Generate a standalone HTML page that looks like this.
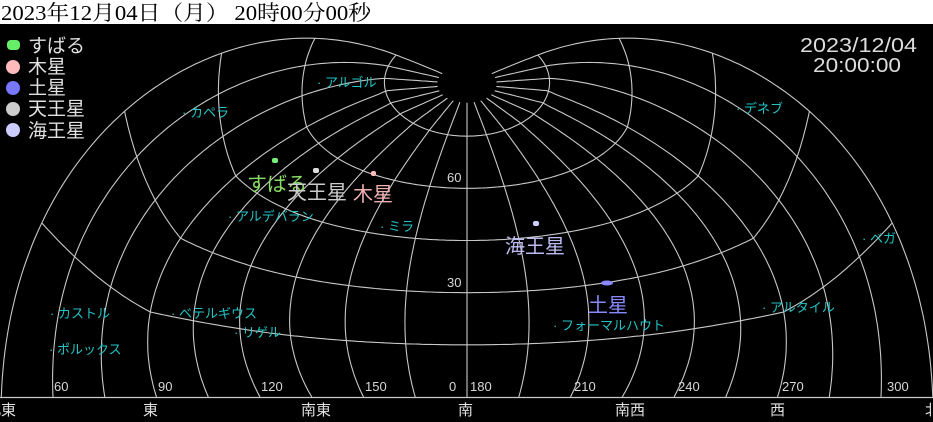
<!DOCTYPE html>
<html><head><meta charset="utf-8">
<style>
html,body{margin:0;padding:0;background:#000;width:933px;height:422px;overflow:hidden}
svg{display:block}
.jp{font-family:"Liberation Sans","Noto Sans CJK JP",sans-serif}
</style></head>
<body>
<svg id="s" width="933" height="422" viewBox="0 0 933 422" xmlns="http://www.w3.org/2000/svg">
<rect x="0" y="0" width="933" height="422" fill="#000"/>
<rect x="0" y="0" width="933" height="24" fill="#fff"/>
<text x="1" y="20" font-size="21" fill="#000" textLength="370" lengthAdjust="spacingAndGlyphs" font-family="'Liberation Serif','Noto Serif CJK SC',serif">2023年12月04日（月） 20時00分00秒</text>
<g id="grid" fill="none" stroke="#c8c8c8" stroke-width="1.1"></g>
<line x1="0" y1="397.5" x2="933" y2="397.5" stroke="#c8c8c8" stroke-width="1.3"/>
<ellipse cx="467" cy="79" rx="23" ry="21" fill="#000"/>
<g class="jp" font-size="13" fill="#d8d8d8">
<text x="54" y="391">60</text><text x="158" y="391">90</text><text x="261" y="391">120</text>
<text x="365" y="391">150</text><text x="449" y="391">0</text><text x="470" y="391">180</text>
<text x="574" y="391">210</text><text x="678" y="391">240</text><text x="782" y="391">270</text>
<text x="887" y="391">300</text>
<text x="447" y="182">60</text><text x="447" y="287">30</text>
</g>
<g class="jp" font-size="15" fill="#e0e0e0">
<text x="-14" y="415">北東</text><text x="143" y="415">東</text><text x="301" y="415">南東</text>
<text x="458" y="415">南</text><text x="615" y="415">南西</text><text x="770" y="415">西</text>
<text x="925" y="415">北西</text>
</g>
<g class="jp" font-size="20" fill="#dcdcdc">
<text x="800" y="52" textLength="117" lengthAdjust="spacingAndGlyphs">2023/12/04</text>
<text x="813" y="72" textLength="88" lengthAdjust="spacingAndGlyphs">20:00:00</text>
</g>
<g class="jp" font-size="19" fill="#e0e0e0">
<rect x="7" y="40" width="13" height="10" rx="4" fill="#66ee66"/>
<circle cx="13" cy="67" r="7" fill="#ffbbbb"/>
<circle cx="13" cy="88" r="7" fill="#7777ff"/>
<circle cx="13" cy="109" r="7" fill="#cccccc"/>
<circle cx="13" cy="130" r="7" fill="#ccccff"/>
<text x="28" y="52">すばる</text><text x="28" y="73">木星</text><text x="28" y="94">土星</text>
<text x="28" y="115">天王星</text><text x="28" y="137">海王星</text>
</g>
<g class="jp" font-size="13" fill="#22c4c4">
<text x="317" y="87">· アルゴル</text>
<text x="182" y="117">· カペラ</text>
<text x="736" y="113">· デネブ</text>
<text x="228" y="221">· アルデバラン</text>
<text x="380" y="231">· ミラ</text>
<text x="862" y="243">· ベガ</text>
<text x="50" y="318">· カストル</text>
<text x="171" y="318">· ベテルギウス</text>
<text x="234" y="337">· リゲル</text>
<text x="49" y="354">· ポルックス</text>
<text x="762" y="312">· アルタイル</text>
<text x="553" y="330">· フォーマルハウト</text>
</g>
<g class="jp" font-size="20">
<rect x="272" y="158" width="6" height="5" rx="2" fill="#77ee77"/>
<rect x="313" y="168" width="6" height="5" rx="2" fill="#dddddd"/>
<rect x="371" y="171" width="5" height="5" rx="2" fill="#ffbbbb"/>
<rect x="533" y="221" width="6" height="5" rx="2" fill="#ccccff"/>
<ellipse cx="607" cy="283" rx="6" ry="2.5" fill="#8888ff"/>
<text x="247" y="191" fill="#88dd66">すばる</text>
<text x="287" y="199" fill="#cccccc">天王星</text>
<text x="353" y="201" fill="#f0b0b0">木星</text>
<text x="505" y="253" fill="#bbbbf0">海王星</text>
<text x="588" y="312" fill="#8888ff">土星</text>
</g>
</svg>
<script>
(function(){
var Z=[467,84];
function P(t,phi){
  var s=phi<0?-1:1, ap=Math.abs(phi), a=ap*Math.PI/180*0.917;
  var ex=495*Math.sin(a), ey=313*Math.cos(a);
  var hx=3.45*ap, hy=313;
  var wx=Math.pow(t,2.2);
  var u=Math.max(0,(t-1/6)/(5/6));
  var p=0.7+0.9*Math.max(0,(ap-90)/45);
  var wy=Math.pow(u,p);
  var kb=80*Math.pow(Math.max(0,(ap-60)/75),2);
  var bul=kb*t*t*(1-t)*6.75;
  var x=(ex+(hx-ex)*wx+bul)*t, y=(ey+(hy-ey)*wy)*t;
  return [Z[0]+s*x, Z[1]+y];
}
var g=document.getElementById('grid'), ns='http://www.w3.org/2000/svg';
function add(pts){
  var d='M'+pts.map(function(q){return q[0].toFixed(1)+' '+q[1].toFixed(1)}).join('L');
  var e=document.createElementNS(ns,'path'); e.setAttribute('d',d); g.appendChild(e);
}
for(var k=1;k<=5;k++){
  var t=k/6, pts=[];
  for(var ph=-135;ph<=135;ph+=1) pts.push(P(t,ph));
  add(pts);
}
for(var ph=-135;ph<=135;ph+=15){
  var pts=[];
  for(var i=0;i<=120;i++){ var t=0.06+0.94*i/120; pts.push(P(t,ph)); }
  add(pts);
}
})();
</script>
</body></html>
